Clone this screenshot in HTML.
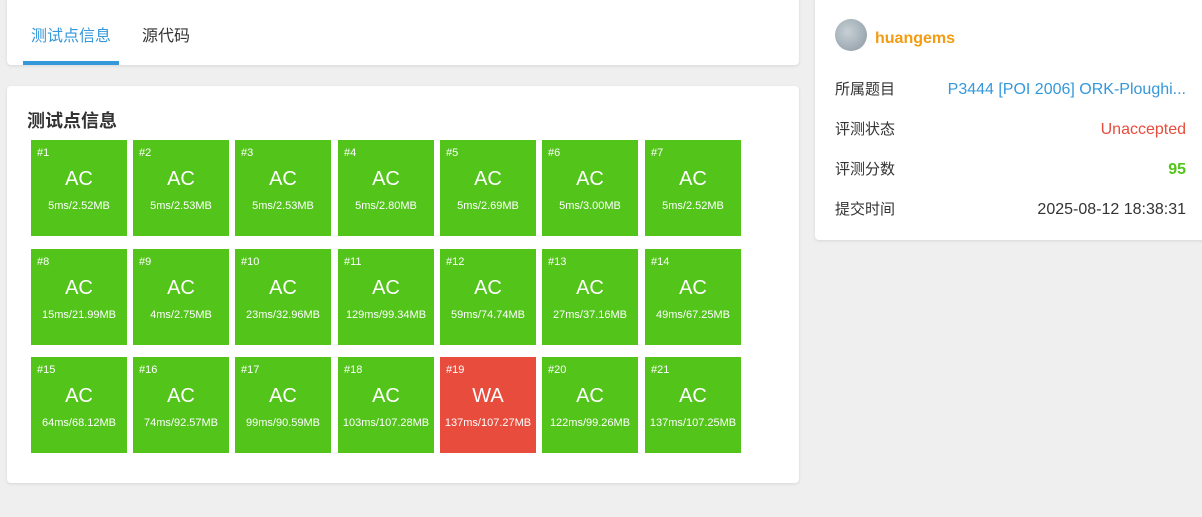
<!DOCTYPE html>
<html><head><meta charset="utf-8"><style>
*{box-sizing:border-box;margin:0;padding:0}
body{width:1202px;height:517px;background:#efefef;font-family:"Liberation Sans","Noto Sans CJK SC",sans-serif;position:relative;overflow:hidden;color:#333}
.card{position:absolute;background:#fff;border-radius:4px;box-shadow:0 1px 3px rgba(0,0,0,.1)}
.tab{position:absolute;top:22px;font-size:16px}
.t{position:absolute;width:96px;height:96px;background:#52c41a;color:#fff;text-align:center}
.t.wa{background:#e74c3c}
.t .n{position:absolute;left:6px;top:7px;font-size:11px}
.t .s{position:absolute;top:28px;left:0;right:0;font-size:20px}
.t .m{position:absolute;top:60px;left:0;right:0;font-size:11px}
.row{position:absolute;left:20px;width:351px;font-size:15px;height:24px}
.row .l{position:absolute;left:0;top:0;line-height:24px}
.row .v{position:absolute;right:0;top:0;line-height:24px;font-size:16px}
</style></head><body>
<div class="card" style="left:7px;top:-4px;width:792px;height:69px">
<div class="tab" style="left:24px;top:26px;color:#3498db">测试点信息</div>
<div class="tab" style="left:135px;top:26px;color:#333">源代码</div>
<div style="position:absolute;left:16px;top:65px;width:96px;height:4px;background:#3498db"></div>
</div>
<div class="card" style="left:7px;top:86px;width:792px;height:397px">
<div style="position:absolute;left:20px;top:21px;font-size:18px;font-weight:bold">测试点信息</div>
</div>
<div id="tiles"></div>
<div class="card" style="left:815px;top:-4px;width:400px;height:244px">
<div style="position:absolute;left:20px;top:23px;width:32px;height:32px;border-radius:50%;background:radial-gradient(circle at 40% 40%,#c8d0d6,#8a98a2)"></div>
<div style="position:absolute;left:60px;top:34px;font-size:16px;font-weight:bold;color:#f39c12">huangems</div>
<div class="row" style="top:82px"><span class="l">所属题目</span><span class="v" style="color:#3498db">P3444 [POI 2006] ORK-Ploughi...</span></div>
<div class="row" style="top:122px"><span class="l">评测状态</span><span class="v" style="color:#e74c3c">Unaccepted</span></div>
<div class="row" style="top:162px"><span class="l">评测分数</span><span class="v" style="color:#52c41a;font-weight:bold">95</span></div>
<div class="row" style="top:202px"><span class="l">提交时间</span><span class="v">2025-08-12 18:38:31</span></div>
</div>
<script>
var d=["5ms/2.52MB","5ms/2.53MB","5ms/2.53MB","5ms/2.80MB","5ms/2.69MB","5ms/3.00MB","5ms/2.52MB","15ms/21.99MB","4ms/2.75MB","23ms/32.96MB","129ms/99.34MB","59ms/74.74MB","27ms/37.16MB","49ms/67.25MB","64ms/68.12MB","74ms/92.57MB","99ms/90.59MB","103ms/107.28MB","137ms/107.27MB","122ms/99.26MB","137ms/107.25MB"];
var xs=[31,133,235,338,440,542,645],ys=[140,249,357],h="";
d.forEach(function(m,i){var wa=i==18;h+='<div class="t'+(wa?' wa':'')+'" style="left:'+xs[i%7]+'px;top:'+ys[Math.floor(i/7)]+'px"><span class="n">#'+(i+1)+'</span><div class="s">'+(wa?'WA':'AC')+'</div><div class="m">'+m+'</div></div>';});
document.getElementById('tiles').innerHTML=h;
</script>
</body></html>
